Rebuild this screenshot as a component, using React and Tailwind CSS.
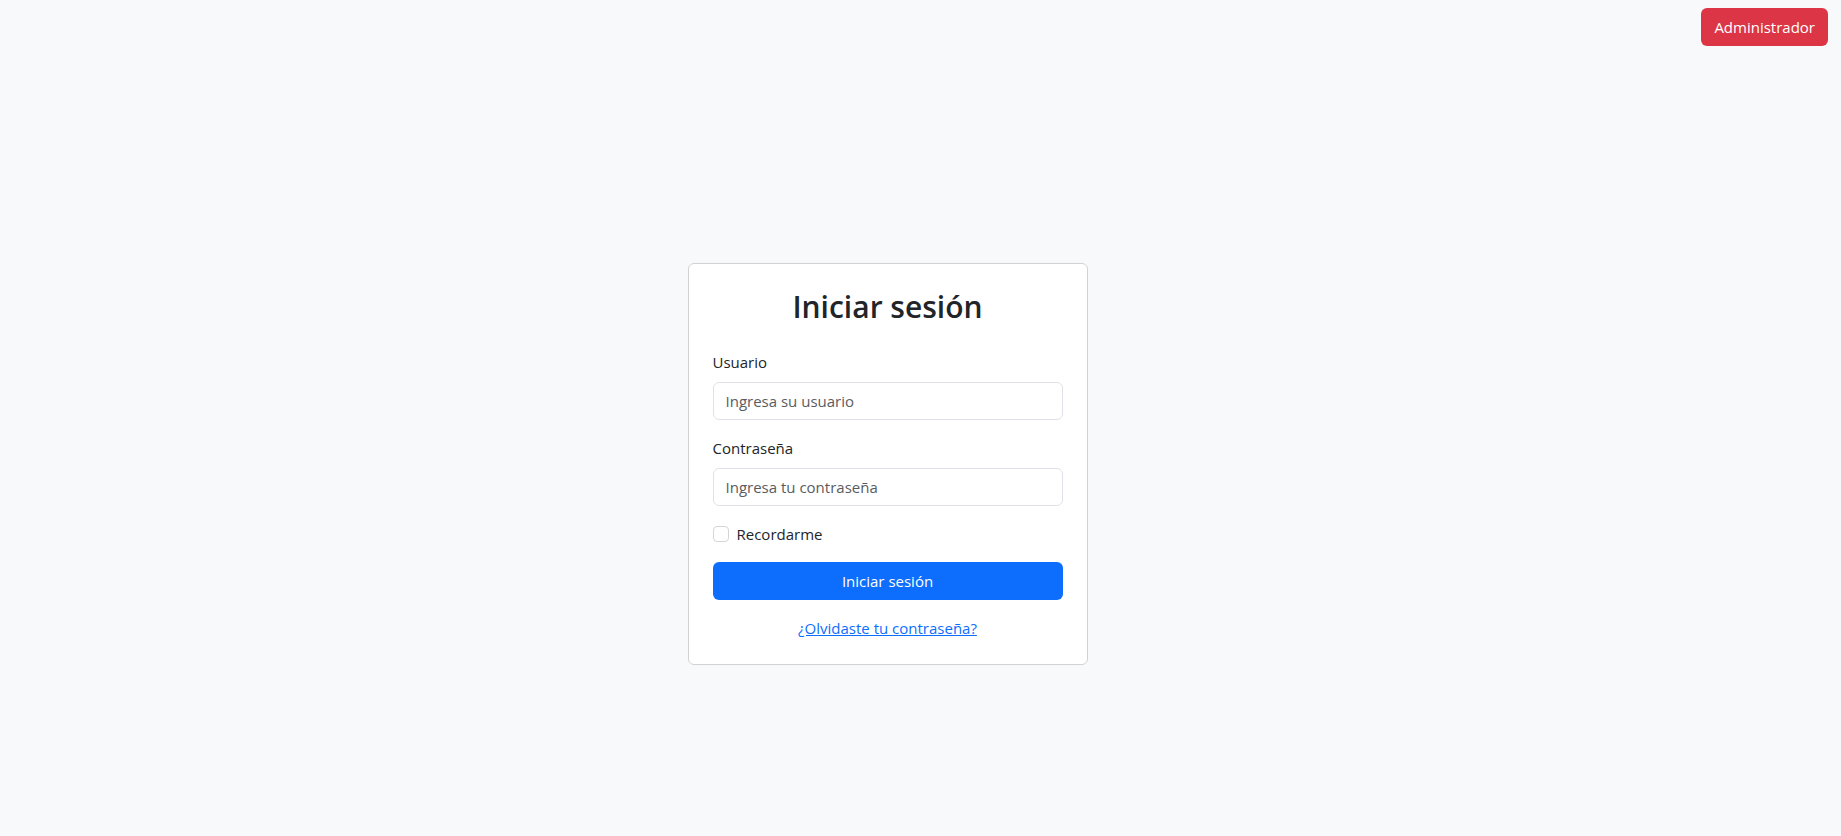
export default function App() {
  return (
    <div className="bg-[#f8f9fa] text-[#212529] text-[15px] leading-6" style={{ fontFamily: '"Open Sans", "Noto Sans", sans-serif' }}>
      <header className="flex justify-end pt-2 pr-[13px]">
        <button className="h-[38px] rounded-[6px] bg-[#dc3545] px-[13px] text-white">Administrador</button>
      </header>
      <div className="flex min-h-screen items-center justify-center pr-[66px]">
        <div className="w-[400px] rounded-[6px] border border-[#d0d2d4] bg-white p-6">
          <h2 className="mb-6 text-center text-[30px] font-semibold leading-[38px]">Iniciar sesión</h2>
          <div className="mb-4">
            <label className="mb-2 block">Usuario</label>
            <input className="h-[38px] w-full rounded-[6px] border border-[#dee2e6] px-3 outline-none placeholder:text-[#595c5f]" placeholder="Ingresa su usuario" />
          </div>
          <div className="mb-4">
            <label className="mb-2 block">Contraseña</label>
            <input type="password" className="h-[38px] w-full rounded-[6px] border border-[#dee2e6] px-3 outline-none placeholder:text-[#595c5f]" placeholder="Ingresa tu contraseña" />
          </div>
          <div className="mb-4 flex items-start">
            <span className="mt-1 h-4 w-4 rounded-[4px] border border-[#d3d6d9] bg-white"></span>
            <label className="ml-2">Recordarme</label>
          </div>
          <button className="h-[38px] w-full rounded-[6px] bg-[#0d6efd] text-white">Iniciar sesión</button>
          <div className="mt-4 text-center">
            <a href="#" className="text-[#0d6efd] underline">¿Olvidaste tu contraseña?</a>
          </div>
        </div>
      </div>
    </div>
  );
}
